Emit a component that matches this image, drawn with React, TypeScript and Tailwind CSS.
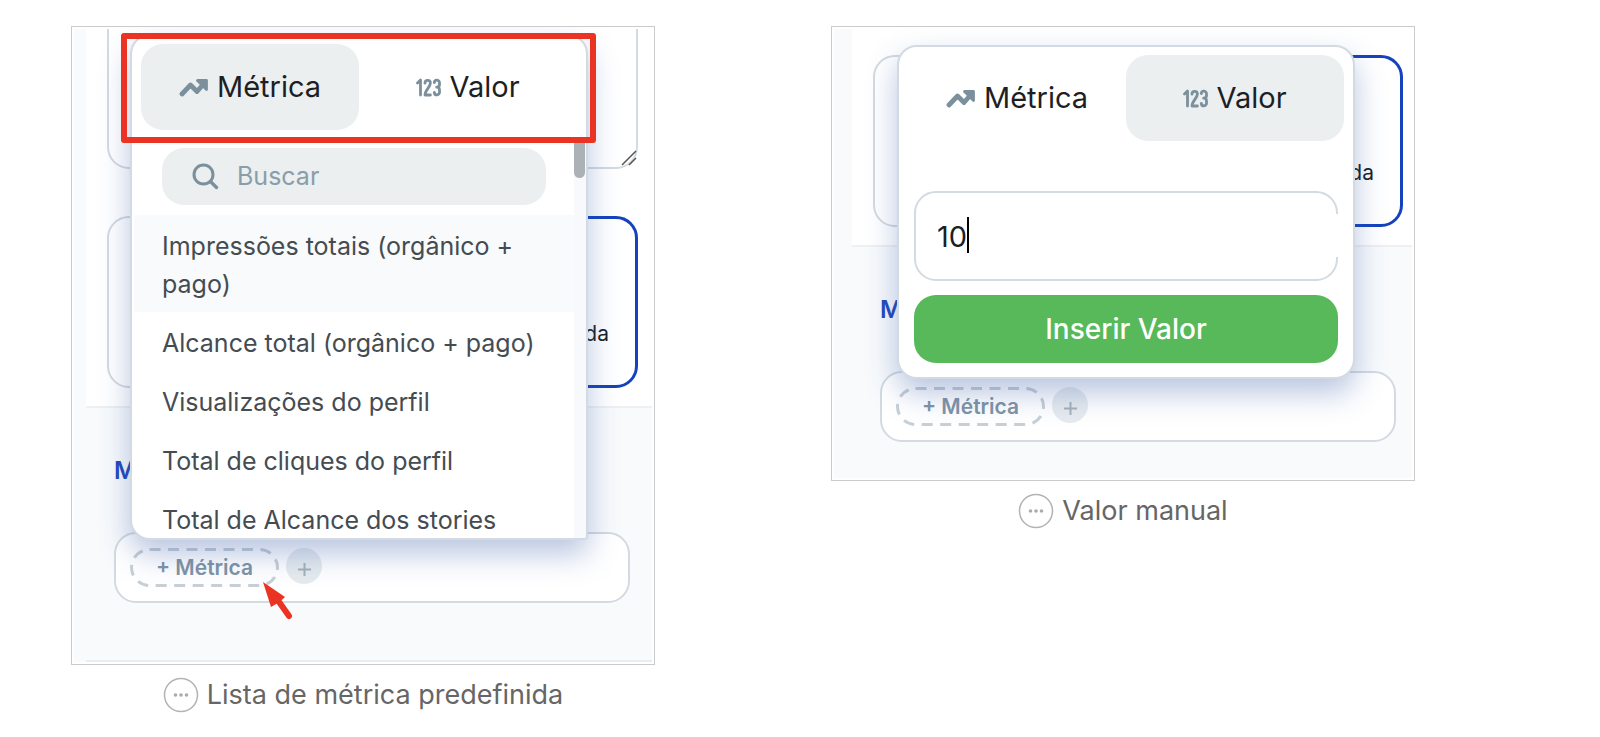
import React, { useState } from 'react';
import { clsx } from 'clsx';

type Tab = 'metric' | 'value';

const METRICS = [
  'Impressões totais (orgânico + pago)',
  'Alcance total (orgânico + pago)',
  'Visualizações do perfil',
  'Total de cliques do perfil',
  'Total de Alcance dos stories',
];

function TrendIcon() {
  return (
    <svg className="h-[19px] w-[30px] text-[#7b909c]" viewBox="0 0 30 19" fill="none" aria-hidden="true">
      <path
        d="M3 16l8.500-9 6.500 6.500 7-8"
        stroke="currentColor"
        strokeWidth="4.800"
        strokeLinecap="round"
        strokeLinejoin="round"
      />
      <path
        d="M18.500 2.500h9v9z"
        fill="currentColor"
        stroke="currentColor"
        strokeWidth="2.800"
        strokeLinejoin="round"
      />
    </svg>
  );
}

function NumbersIcon() {
  return (
    <svg
      className="h-[19px] w-[25px] text-[#7b909c]"
      viewBox="0 0 25 19"
      fill="none"
      stroke="currentColor"
      strokeWidth="2.800"
      strokeLinecap="round"
      strokeLinejoin="round"
      aria-hidden="true"
    >
      <path d="M1.500 5l3-3v15" />
      <path d="M9 5.200V5a2.700 2.700 0 0 1 5.400 0c0 4-5.400 7-5.400 12h5.400" />
      <path d="M18.300 4.500a2.600 2.600 0 0 1 5.200.5v1.500c0 1.500-1 2.700-2.800 2.700 1.800 0 2.800 1.200 2.800 2.800V14a2.600 2.600 0 0 1-5.200.5" />
    </svg>
  );
}

function SearchIcon() {
  return (
    <svg
      className="h-[27px] w-[27px] shrink-0 text-[#7b909c]"
      viewBox="0 0 27 27"
      fill="none"
      stroke="currentColor"
      strokeWidth="3"
      aria-hidden="true"
    >
      <circle cx="11.500" cy="11.500" r="9.500" />
      <path d="M18.500 18.500l6 6" strokeWidth="3.400" strokeLinecap="round" />
    </svg>
  );
}

function Tabs({ active, onChange }: { active: Tab; onChange: (tab: Tab) => void }) {
  const tabs: { id: Tab; label: string; icon: React.ReactNode }[] = [
    { id: 'metric', label: 'Métrica', icon: <TrendIcon /> },
    { id: 'value', label: 'Valor', icon: <NumbersIcon /> },
  ];

  return (
    <div className="flex px-[9px] pt-2" role="tablist">
      {tabs.map((tab) => (
        <button
          key={tab.id}
          role="tab"
          aria-selected={active === tab.id}
          onClick={() => onChange(tab.id)}
          className={clsx(
            'flex h-[86px] flex-1 cursor-pointer items-center justify-center gap-2 rounded-[22px] text-[29px] text-[#1d1f24]',
            active === tab.id && 'bg-[#ebefef]',
          )}
        >
          {tab.icon}
          <span>{tab.label}</span>
        </button>
      ))}
    </div>
  );
}

function OptionCards() {
  return (
    <div className="grid grid-cols-2 gap-4">
      <div className="h-[172px] rounded-[22px] border-2 border-[#d3dae1]" />
      <div className="flex h-[172px] items-end justify-end rounded-[22px] border-[3px] border-[#1443bd] px-[26px] pb-9 text-[21px] text-[#1d1f24]">
        da
      </div>
    </div>
  );
}

function MessageField() {
  return (
    <>
      <div className="text-2xl font-semibold text-[#2447bd]">M</div>
      <div className="mt-[45px] flex h-[71px] items-start gap-[7px] rounded-[22px] border-2 border-[#d3dae1] bg-white px-[14px] pt-[14px]">
        <button className="relative flex h-[39px] w-[149px] cursor-pointer items-center justify-center text-[21px] font-semibold text-[#7f94a5]">
          <svg className="absolute inset-0 h-full w-full" viewBox="0 0 149 39" fill="none" aria-hidden="true">
            <rect
              x="1.500"
              y="1.500"
              width="146"
              height="36"
              rx="18"
              stroke="#c7d0d7"
              strokeWidth="3"
              strokeDasharray="11 7.500"
            />
          </svg>
          + Métrica
        </button>
        <button
          className="flex h-9 w-9 cursor-pointer items-center justify-center rounded-full bg-[#e6ebee] pt-[6px] text-[#a3b2bb]"
          aria-label="Adicionar"
        >
          <svg className="h-[13px] w-[13px]" viewBox="0 0 13 13" stroke="currentColor" strokeWidth="2" aria-hidden="true">
            <path d="M6.500 0v13M0 6.500h13" />
          </svg>
        </button>
      </div>
    </>
  );
}

const POPOVER =
  'absolute rounded-[20px] border-2 border-[#d3dae1] bg-white shadow-[0_14px_30px_rgba(52,90,165,0.35)]';

function MetricPopover() {
  const [tab, setTab] = useState<Tab>('metric');
  const [query, setQuery] = useState('');
  const items = METRICS.filter((m) => m.toLowerCase().includes(query.toLowerCase()));

  return (
    <div className={clsx(POPOVER, 'left-[58px] right-[66px] top-[7px] overflow-hidden rounded-br-sm')}>
      <Tabs active={tab} onChange={setTab} />
      <div className="mt-2 flex max-h-[400px] overflow-hidden">
        <div className="min-w-0 flex-1 pt-[10px]">
          <label className="ml-[30px] mr-7 flex h-[57px] items-center gap-[18px] rounded-[22px] bg-[#ebefef] pl-[30px] pr-5">
            <SearchIcon />
            <input
              value={query}
              onChange={(e) => setQuery(e.target.value)}
              placeholder="Buscar"
              aria-label="Buscar"
              className="w-full bg-transparent text-[25px] text-[#3f474e] outline-none placeholder:text-[#8a9da9]"
            />
          </label>
          <ul className="mt-[10px]">
            {items.map((item, i) => (
              <li
                key={item}
                className={clsx(
                  'ml-[2px] pb-[9px] pl-7 pr-9 pt-3 text-[25px] leading-[38px] text-[#444c52]',
                  i === 0 && 'bg-[#f9fafc]',
                )}
              >
                {item}
              </li>
            ))}
          </ul>
        </div>
        <div className="w-[12px] bg-[#f8f9fc]">
          <div className="h-10 w-[11px] rounded-b-full bg-[#abb1b5]" />
        </div>
      </div>
    </div>
  );
}

function ValuePopover() {
  const [tab, setTab] = useState<Tab>('value');
  const [value, setValue] = useState('10');

  return (
    <div className={clsx(POPOVER, 'left-[65px] right-[59px] top-[18px]')}>
      <Tabs active={tab} onChange={setTab} />
      <div className="flex flex-col gap-[14px] px-[15px] pb-[14px] pt-[50px]">
        <div className="relative">
          <input
            value={value}
            onChange={(e) => setValue(e.target.value)}
            aria-label="Valor"
            className="h-[90px] w-full rounded-[22px] border-2 border-[#d3dae1] pl-[21px] text-[29px] text-[#1d1f24] outline-none"
          />
          {/* caret */}
          <span className="absolute left-[53px] top-[26px] h-9 w-[2px] bg-black" />
          <span className="absolute right-0 top-[23px] h-[43px] w-1 bg-white" />
        </div>
        <button className="h-[68px] cursor-pointer rounded-[22px] bg-[#57b959] text-[28px] font-medium text-white">
          Inserir Valor
        </button>
      </div>
    </div>
  );
}

function Caption({ children }: { children: React.ReactNode }) {
  return (
    <figcaption className="mt-[10px] flex items-center justify-center gap-2 text-[27px] leading-10 text-[#666]">
      <svg className="h-9 w-9" viewBox="0 0 36 36" fill="none" aria-hidden="true">
        <circle cx="18" cy="18" r="16.500" stroke="#b3b3b3" strokeWidth="1.500" />
        <circle cx="12.500" cy="18" r="1.800" fill="#aaa" />
        <circle cx="18" cy="18" r="1.800" fill="#aaa" />
        <circle cx="23.500" cy="18" r="1.800" fill="#aaa" />
      </svg>
      {children}
    </figcaption>
  );
}

export default function App() {
  return (
    <main className="grid grid-cols-2 items-start gap-[176px] bg-white pb-4 pl-[71px] pr-[185px] pt-[26px] font-['Inter',sans-serif]">
      <figure>
        <div className="relative overflow-hidden border border-[#cbcbcb] p-[2px]">
          <div className="bg-[#f8fafc] pl-3">
            <div className="border-b-2 border-[#edf0f4] bg-white pb-[18px] pl-[21px] pr-[14px]">
              <textarea
                aria-label="Descrição"
                className="block h-[140px] w-full resize-none rounded-b-[22px] border-2 border-t-0 border-[#d3dae1] outline-none"
              />
              <svg
                className="absolute right-[17px] top-[123px] h-4 w-4 text-[#555]"
                viewBox="0 0 16 16"
                stroke="currentColor"
                strokeWidth="1.500"
                aria-hidden="true"
              >
                <path d="M1 15L15 1M8 15l7-7" />
              </svg>
              <div className="pt-[47px]">
                <OptionCards />
              </div>
            </div>
            <div className="border-b-2 border-[#e9edf0] pb-[57px] pl-7 pr-[22px] pt-[47px]">
              <MessageField />
            </div>
          </div>
          <MetricPopover />
          {/* highlight around the tabs */}
          <div className="absolute left-[49px] right-[58px] top-[6px] h-[110px] rounded-[3px] border-[6px] border-[#ea3323]" />
          <svg className="absolute left-[190px] top-[554px] h-10 w-8 text-[#ea3323]" viewBox="0 0 32 40" fill="currentColor" aria-hidden="true">
            <path d="M1 1l22 15-5.500 5-8.500 5z" />
            <path d="M15 18l12 17" stroke="currentColor" strokeWidth="6" strokeLinecap="round" />
          </svg>
        </div>
        <Caption>Lista de métrica predefinida</Caption>
      </figure>

      <figure>
        <div className="relative overflow-hidden border border-[#cbcbcb] p-[2px]">
          <div className="bg-[#f8fafc] pl-[18px]">
            <div className="border-b-2 border-[#edf0f4] bg-white pb-[18px] pl-[21px] pr-[9px] pt-[26px]">
              <OptionCards />
            </div>
            <div className="pb-9 pl-7 pr-4 pt-[47px]">
              <MessageField />
            </div>
          </div>
          <ValuePopover />
        </div>
        <Caption>Valor manual</Caption>
      </figure>
    </main>
  );
}
